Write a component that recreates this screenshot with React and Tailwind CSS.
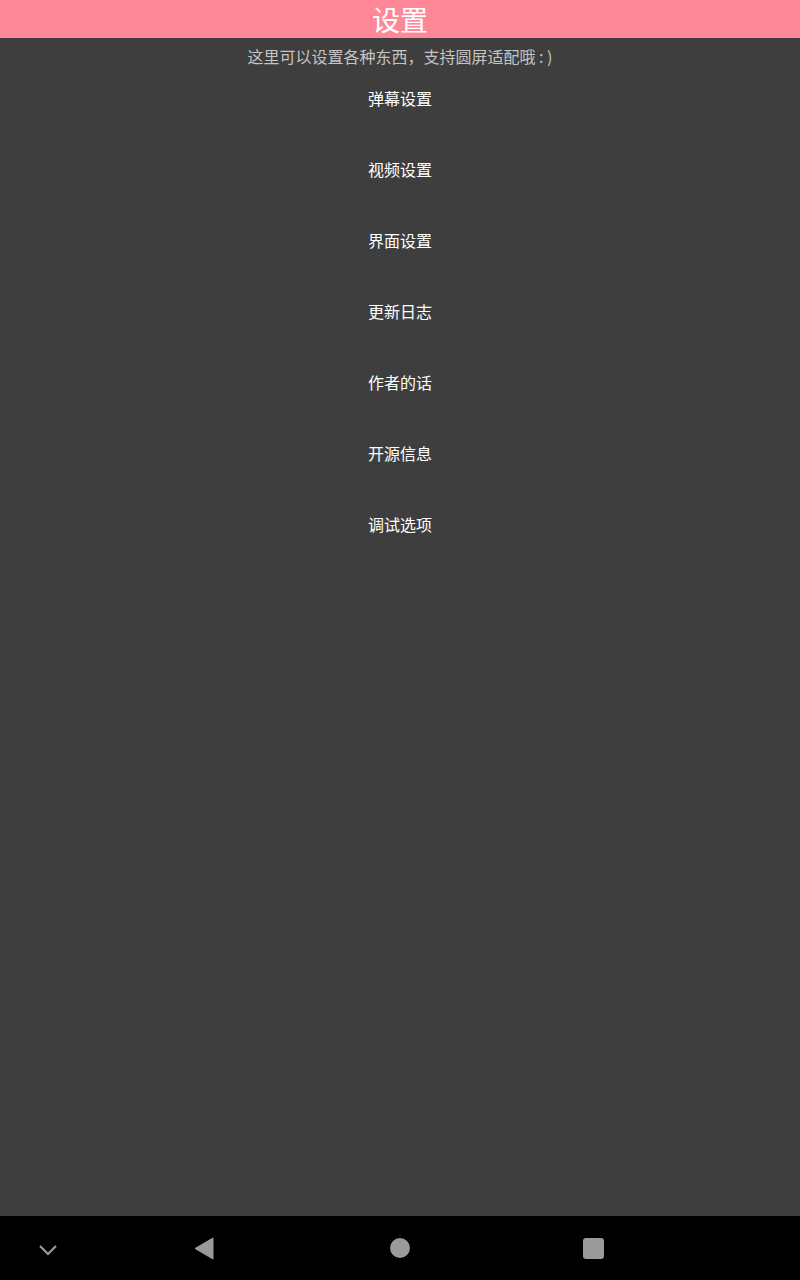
const items = ['弹幕设置', '视频设置', '界面设置', '更新日志', '作者的话', '开源信息', '调试选项'];

const font = { fontFamily: '"Noto Sans CJK SC", "Noto Sans", sans-serif' };

const App = () => {
  return (
    <div className="w-[800px] h-[1280px] flex flex-col bg-[#3e3e3e]" style={font}>
      <div className="h-[38px] bg-[#ff8898] flex items-center justify-center text-white text-[28px] leading-none">
        设置
      </div>
      <div className="flex-1 flex flex-col items-center">
        <p className="h-[36px] flex items-center text-[16px] text-[#c4c4c4] whitespace-pre">
          {'这里可以设置各种东西，支持圆屏适配哦 : )'}
        </p>
        <div className="flex flex-col items-center gap-[21px] -mt-px">
          {items.map((item) => (
            <div key={item} className="h-[50px] flex items-center text-[16px] text-white">
              {item}
            </div>
          ))}
        </div>
      </div>
      <div className="h-[64px] bg-black relative">
        <svg className="absolute left-[38px] top-[28px]" width="20" height="12" viewBox="0 0 20 12">
          <path d="M2 2 L10 10 L18 2" stroke="#9a9a9a" strokeWidth="2.2" fill="none" />
        </svg>
        <svg className="absolute left-[194px] top-[21px]" width="20" height="23" viewBox="0 0 20 23">
          <path d="M19 1 L19 22 L1 11.5 Z" fill="#9a9a9a" stroke="#9a9a9a" strokeWidth="1" strokeLinejoin="round" />
        </svg>
        <div className="absolute left-[390px] top-[22px] w-[20px] h-[20px] rounded-full bg-[#9a9a9a]" />
        <div className="absolute left-[583px] top-[22px] w-[21px] h-[21px] rounded-[3px] bg-[#9a9a9a]" />
      </div>
    </div>
  );
};

export default App;
